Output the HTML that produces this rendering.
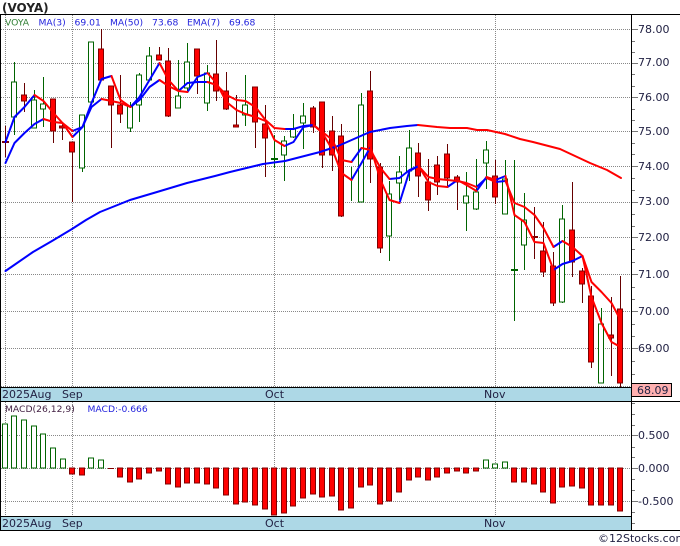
<!DOCTYPE html>
<html>
<head>
<meta charset="utf-8">
<style>
html,body{margin:0;padding:0;background:#fff;width:680px;height:546px;overflow:hidden}
svg{display:block}
text{font-family:"DejaVu Sans","Liberation Sans",sans-serif}
.ax{font-size:11px;fill:#222244}
.lg{font-size:9.2px}
</style>
</head>
<body>
<svg width="680" height="546" viewBox="0 0 680 546" xmlns="http://www.w3.org/2000/svg" shape-rendering="auto">
<rect width="680" height="546" fill="#fff"/>
<text x="2" y="12" font-size="12" font-weight="bold" fill="#222">(VOYA)</text>

<!-- grid -->
<path d="M1 29.5H631M1 63.5H631M1 97.5H631M1 131.5H631M1 166.5H631M1 202.5H631M1 237.5H631M1 274.5H631M1 311.5H631M1 348.5H631M1 386.5H631M1 435.5H631M1 468.5H631M1 501.5H631" stroke="#888" stroke-width="1" stroke-dasharray="1 1" fill="none"/>
<path d="M5.5 15V387M72.5 15V387M274.5 15V387M495.5 15V387M5.5 402V516M72.5 402V516M274.5 402V516M495.5 402V516" stroke="#888" stroke-width="1" stroke-dasharray="1 1" fill="none"/>

<!-- green wicks -->
<path d="M14.5 62V135M34.5 90V128M43.5 77V127M82.5 115V172M91.5 42V102M130.5 102V132M139.5 73V122M149.5 47V80M178.5 60V108M187.5 43V92M207.5 65V111M245.5 75V126M274.5 135V168M284.5 136V181M293.5 114V138M303.5 103V149M351.5 167V201M361.5 93V202M389.5 181V261M399.5 156V200M409.5 130V181M466.5 172V231M476.5 159V210M486.5 141V189M505.5 160V214M514.5 160V321M524.5 193V270M562.5 205V303M601.5 308V383" stroke="#006400" stroke-width="1" fill="none"/>
<!-- green bodies -->
<path d="M11.5 82h5V117h-5zM31.5 100h5V128h-5zM40.5 104h5V109h-5zM79.5 115h5V168h-5zM88.5 42h5V102h-5zM127.5 106h5V128h-5zM136.5 75h5V105h-5zM146.5 56h5V80h-5zM175.5 96h5V108h-5zM184.5 62h5V88h-5zM204.5 73h5V103h-5zM242.5 105h5V115h-5zM281.5 141h5V155h-5zM290.5 129h5V137h-5zM300.5 116h5V123h-5zM358.5 105h5V202h-5zM386.5 194h5V236h-5zM396.5 172h5V183h-5zM406.5 148h5V171h-5zM463.5 196h5V203h-5zM473.5 192h5V209h-5zM483.5 150h5V163h-5zM502.5 179h5V214h-5zM521.5 220h5V245h-5zM559.5 219h5V302h-5zM598.5 324h5V383h-5z" stroke="#006400" stroke-width="1" fill="#fff"/>
<rect x="271" y="158" width="7" height="2" fill="#006400"/>
<rect x="511" y="269" width="7" height="2" fill="#006400"/>

<!-- red wicks -->
<path d="M5.5 126V157M24.5 83V112M53.5 99V143M62.5 122V140M72.5 142V202M101.5 29V80M111.5 86V148M120.5 75V123M159.5 47V60M168.5 48V117M197.5 49V94M216.5 40V101M226.5 72V110M236.5 95V127M255.5 87V148M265.5 105V177M313.5 106V133M322.5 102V168M332.5 116V171M341.5 124V217M370.5 71V183M380.5 163V253M418.5 143V197M428.5 159V211M437.5 156V195M447.5 144V188M457.5 175V210M495.5 160V204M534.5 207V259M543.5 222V277M553.5 252V306M572.5 182V277M582.5 268V303M591.5 286V368M611.5 297V376M620.5 276V387" stroke="#660000" stroke-width="1" fill="none"/>
<!-- red bodies -->
<path d="M21.5 95h5V101h-5zM50.5 99h5V131h-5zM59.5 126h5V128h-5zM69.5 142h5V152h-5zM98.5 49h5V80h-5zM108.5 86h5V105h-5zM117.5 105h5V114h-5zM156.5 55h5V60h-5zM165.5 61h5V116h-5zM194.5 49h5V76h-5zM213.5 74h5V91h-5zM223.5 91h5V109h-5zM233.5 125h5V127h-5zM252.5 87h5V122h-5zM262.5 124h5V138h-5zM310.5 108h5V127h-5zM319.5 102h5V155h-5zM329.5 131h5V155h-5zM338.5 136h5V216h-5zM367.5 91h5V159h-5zM377.5 167h5V248h-5zM415.5 153h5V176h-5zM425.5 182h5V200h-5zM434.5 165h5V182h-5zM444.5 154h5V178h-5zM454.5 177h5V182h-5zM492.5 176h5V197h-5zM540.5 251h5V272h-5zM550.5 266h5V303h-5zM569.5 230h5V262h-5zM579.5 271h5V284h-5zM588.5 296h5V362h-5zM608.5 335h5V338h-5zM617.5 309h5V383h-5z" stroke="#800000" stroke-width="1" fill="#f00"/>
<rect x="2" y="141" width="7" height="2" fill="#800000"/>
<rect x="531" y="236" width="7" height="2" fill="#800000"/>

<!-- blue lines -->
<g fill="none" stroke="#0000ff" stroke-width="2" stroke-linejoin="round" stroke-linecap="round">
<polyline points="5.5,271 33,252 52,241 72,229 86,220 100,212 115,206 130,200 157,192 187,183 215,176 230,172 263,164 285,161 320,152 338,146 363,135 370,132 390,128 407,126 418,125"/>
<polyline points="5.5,142 14.5,117 24.5,107 34.5,95"/>
<polyline points="72.5,137 82.5,127 91.5,103 101.5,79 111.5,76"/>
<polyline points="130.5,107 139.5,97 149.5,80 159.5,63"/>
<polyline points="187.5,92 197.5,77 207.5,73"/>
<polyline points="284.5,146 293.5,142 303.5,127 313.5,125"/>
<polyline points="351.5,180 361.5,163 370.5,147"/>
<polyline points="399.5,203 409.5,171 418.5,166"/>
<polyline points="447.5,187 457.5,180"/>
<polyline points="476.5,191 486.5,177"/>
<polyline points="495.5,180 505.5,176"/>
<polyline points="553.5,270 562.5,264 572.5,261 582.5,256"/>
<polyline points="5.5,163 14.5,143 24.5,133 34.5,124 43.5,119"/>
<polyline points="72.5,131 82.5,127 91.5,107 101.5,99"/>
<polyline points="130.5,107 139.5,100 149.5,87 159.5,80"/>
<polyline points="178.5,91 187.5,83 197.5,82 207.5,82"/>
<polyline points="284.5,129 293.5,129 303.5,126 313.5,125"/>
<polyline points="351.5,162 361.5,148"/>
<polyline points="389.5,179 399.5,178 409.5,170 418.5,166"/>
<polyline points="476.5,187 486.5,178"/>
<polyline points="495.5,182 505.5,181"/>
<polyline points="553.5,247 562.5,241"/>
</g>
<!-- red lines -->
<g fill="none" stroke="#ff0000" stroke-width="2" stroke-linejoin="round" stroke-linecap="round">
<polyline points="418,125 437,127 450,128 467,128 477,130 487,130 505,134 520,139 533,142 560,149 590,163 607,170 621,178"/>
<polyline points="34.5,95 43.5,101 53.5,113 62.5,123 72.5,137"/>
<polyline points="111.5,76 120.5,100 130.5,107"/>
<polyline points="159.5,63 168.5,80 178.5,91 187.5,92"/>
<polyline points="207.5,73 216.5,83 226.5,102 236.5,110 245.5,114 255.5,117 265.5,121 274.5,140 284.5,146"/>
<polyline points="313.5,125 322.5,133 332.5,150 341.5,173 351.5,180"/>
<polyline points="370.5,147 380.5,180 389.5,200 399.5,203"/>
<polyline points="418.5,166 428.5,182 437.5,186 447.5,187"/>
<polyline points="457.5,180 466.5,185 476.5,191"/>
<polyline points="486.5,177 495.5,180"/>
<polyline points="505.5,176 514.5,215 524.5,222 534.5,242 543.5,243 553.5,270"/>
<polyline points="582.5,256 591.5,297 601.5,323 611.5,342 620.5,347"/>
<polyline points="43.5,119 53.5,122 62.5,123 72.5,131"/>
<polyline points="101.5,99 111.5,101 120.5,103 130.5,107"/>
<polyline points="159.5,80 168.5,86 178.5,91"/>
<polyline points="207.5,82 216.5,85 226.5,95 236.5,100 245.5,101 255.5,107 265.5,120 274.5,128 284.5,129"/>
<polyline points="313.5,125 322.5,132 332.5,140 341.5,160 351.5,162"/>
<polyline points="361.5,148 370.5,150 380.5,168 389.5,179"/>
<polyline points="418.5,166 428.5,177 437.5,179 447.5,180 457.5,181 466.5,183 476.5,187"/>
<polyline points="486.5,178 495.5,182"/>
<polyline points="505.5,181 514.5,203 524.5,207 534.5,215 543.5,228 553.5,247"/>
<polyline points="562.5,241 572.5,247 582.5,256 591.5,282 601.5,292 611.5,303 620.5,320"/>
</g>

<!-- MACD green -->
<path d="M2.5 424h5V468h-5zM11.5 416h5V468h-5zM21.5 420h5V468h-5zM31.5 426h5V468h-5zM40.5 434h5V468h-5zM50.5 448h5V468h-5zM60.5 459h5V468h-5zM88.5 458h5V468h-5zM98.5 460h5V468h-5zM483.5 460h5V468h-5zM492.5 464h5V468h-5zM502.5 462h5V468h-5z" stroke="#006400" stroke-width="1" fill="#fff"/>
<!-- MACD red -->
<path d="M69.5 468h5V474h-5zM79.5 468h5V475h-5zM117.5 468h5V477h-5zM127.5 468h5V482h-5zM136.5 468h5V479h-5zM146.5 468h5V473h-5zM156.5 468h5V471h-5zM165.5 468h5V484h-5zM175.5 468h5V487h-5zM184.5 468h5V483h-5zM194.5 468h5V483h-5zM204.5 468h5V484h-5zM213.5 468h5V488h-5zM223.5 468h5V495h-5zM233.5 468h5V504h-5zM242.5 468h5V502h-5zM252.5 468h5V505h-5zM262.5 468h5V509h-5zM271.5 468h5V515h-5zM281.5 468h5V513h-5zM290.5 468h5V506h-5zM300.5 468h5V498h-5zM310.5 468h5V494h-5zM319.5 468h5V497h-5zM329.5 468h5V496h-5zM338.5 468h5V510h-5zM348.5 468h5V508h-5zM358.5 468h5V487h-5zM367.5 468h5V485h-5zM377.5 468h5V504h-5zM386.5 468h5V501h-5zM396.5 468h5V492h-5zM406.5 468h5V480h-5zM415.5 468h5V477h-5zM425.5 468h5V480h-5zM434.5 468h5V477h-5zM444.5 468h5V473h-5zM454.5 468h5V471h-5zM463.5 468h5V473h-5zM473.5 468h5V471h-5zM511.5 468h5V482h-5zM521.5 468h5V482h-5zM531.5 468h5V484h-5zM540.5 468h5V492h-5zM550.5 468h5V503h-5zM559.5 468h5V487h-5zM569.5 468h5V486h-5zM579.5 468h5V488h-5zM588.5 468h5V505h-5zM598.5 468h5V505h-5zM608.5 468h5V505h-5zM617.5 468h5V511h-5z" stroke="#800000" stroke-width="1" fill="#f00"/>
<path d="M108 468.5h6" stroke="#800000" stroke-width="1"/>

<!-- bands -->
<rect x="1" y="388" width="631" height="13" fill="#add8e6"/>
<rect x="1" y="517" width="631" height="13" fill="#add8e6"/>

<!-- frame -->
<path d="M0 14.5H680M0 387.5H632M0 401.5H680M0 516.5H632M0 530.5H680" stroke="#000" stroke-width="1" fill="none"/>
<path d="M631.5 14V530M0.5 14V530" stroke="#000" stroke-width="1" fill="none"/>

<!-- axis ticks -->
<path d="M632 29.5h6M632 63.5h6M632 97.5h6M632 131.5h6M632 166.5h6M632 202.5h6M632 237.5h6M632 274.5h6M632 311.5h6M632 348.5h6M632 435.5h6M632 468.5h6M632 501.5h6" stroke="#777" stroke-width="1"/>
<path d="M632 41.5h3M632 52.5h3M632 74.5h3M632 86.5h3M632 109.5h3M632 120.5h3M632 143.5h3M632 154.5h3M632 178.5h3M632 190.5h3M632 214.5h3M632 226.5h3M632 249.5h3M632 262.5h3M632 287.5h3M632 299.5h3M632 324.5h3M632 336.5h3M632 361.5h3M632 374.5h3M632 403.5h3M632 414.5h3M632 425.5h3M632 447.5h3M632 457.5h3M632 479.5h3M632 490.5h3M632 512.5h3M632 523.5h3" stroke="#777" stroke-width="1"/>

<!-- axis labels -->
<g>
<text class="ax" x="638" y="33">78.00</text>
<text class="ax" x="638" y="66">77.00</text>
<text class="ax" x="638" y="101">76.00</text>
<text class="ax" x="638" y="135">75.00</text>
<text class="ax" x="638" y="170">74.00</text>
<text class="ax" x="638" y="205">73.00</text>
<text class="ax" x="638" y="241">72.00</text>
<text class="ax" x="638" y="278">71.00</text>
<text class="ax" x="638" y="315">70.00</text>
<text class="ax" x="638" y="352">69.00</text>
<text class="ax" x="638" y="439">0.500</text>
<text class="ax" x="638" y="472">0.000</text>
<text class="ax" x="638" y="505">-0.500</text>
</g>
<rect x="631.5" y="383.5" width="40" height="13" fill="#ffb0b0" stroke="#000" stroke-width="1"/>
<text class="ax" x="637" y="394">68.09</text>

<!-- x labels -->
<text class="ax" x="2" y="398">2025Aug</text>
<text class="ax" x="62" y="398">Sep</text>
<text class="ax" x="265" y="398">Oct</text>
<text class="ax" x="484" y="398">Nov</text>
<text class="ax" x="2" y="527">2025Aug</text>
<text class="ax" x="62" y="527">Sep</text>
<text class="ax" x="265" y="527">Oct</text>
<text class="ax" x="484" y="527">Nov</text>

<!-- legends -->
<text class="lg" x="5" y="25.5" fill="#2e7d32">VOYA</text>
<text class="lg" x="38.5" y="25.5" fill="#2222dd">MA(3)</text>
<text class="lg" x="74.5" y="25.5" fill="#2222dd">69.01</text>
<text class="lg" x="110" y="25.5" fill="#2222dd">MA(50)</text>
<text class="lg" x="152" y="25.5" fill="#2222dd">73.68</text>
<text class="lg" x="187" y="25.5" fill="#2222dd">EMA(7)</text>
<text class="lg" x="229" y="25.5" fill="#2222dd">69.68</text>
<text class="lg" x="5" y="412" fill="#442244">MACD(26,12,9)</text>
<text class="lg" x="87.5" y="412" fill="#2222dd">MACD:-0.666</text>

<text x="598" y="542" font-size="11" fill="#222244">©12Stocks.com</text>
</svg>
</body>
</html>
